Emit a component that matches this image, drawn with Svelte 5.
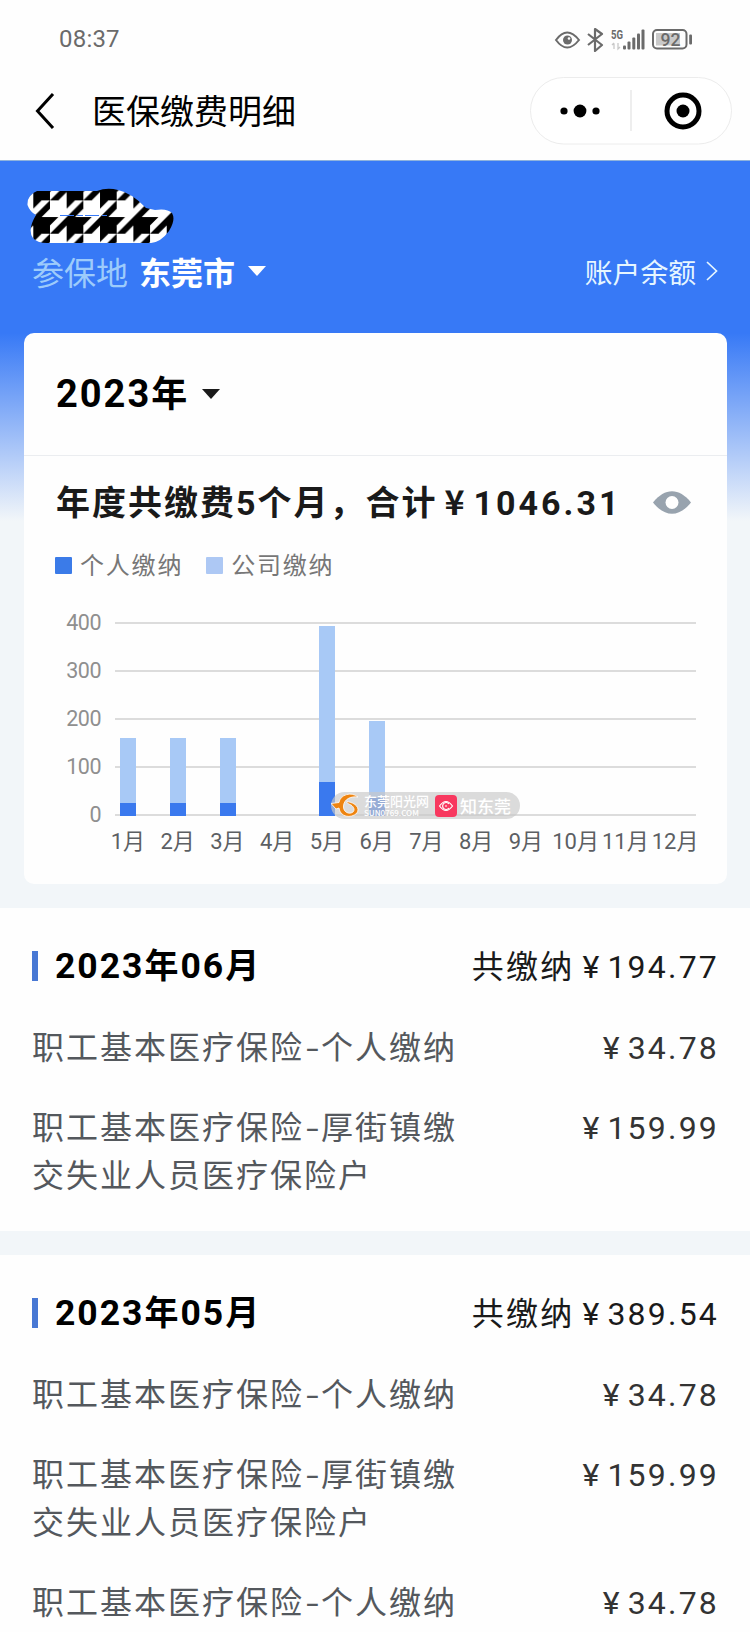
<script>
    const months = [
        {label: 1, self: 13, total: 78},
        {label: 2, self: 13, total: 78},
        {label: 3, self: 13, total: 78},
        {label: 4, self: 0, total: 0},
        {label: 5, self: 34, total: 190},
        {label: 6, self: 18, total: 95},
        {label: 7, self: 0, total: 0},
        {label: 8, self: 0, total: 0},
        {label: 9, self: 0, total: 0},
        {label: 10, self: 0, total: 0},
        {label: 11, self: 0, total: 0},
        {label: 12, self: 0, total: 0},
    ];

    const ticks = [400, 300, 200, 100, 0];

    const self = {name: '职工基本医疗保险', payer: '个人缴纳', money: '34.78'};
    const town = {name: '职工基本医疗保险', payer: '厚街镇缴交失业人员医疗保险户', money: '159.99'};

    const records = [
        {year: '2023', month: '06', sum: '194.77', rows: [self, town]},
        {year: '2023', month: '05', sum: '389.54', rows: [self, town, self]},
    ];
</script>

<div class="page">
    <header class="top">
        <div class="status">
            <span class="time">08:37</span>
            <svg class="status-icons" width="138" height="26" viewBox="0 0 138 26">
                <g fill="none" stroke="#6b6b6b" stroke-width="2">
                    <path d="M2 14Q13 -1 25 14Q13 29 2 14Z" />
                    <path d="M34 8L48 19L41 25V3L48 8L34 19" stroke-width="2.200" stroke-linejoin="round" />
                    <rect x="99" y="4" width="33.500" height="18.500" rx="4" />
                </g>
                <circle cx="13.500" cy="14" r="4.500" fill="#6b6b6b" />
                <circle cx="15" cy="12.500" r="1.300" fill="#fff" />
                <g fill="#6b6b6b">
                    <rect x="69" y="19.500" width="3" height="4" rx="1" />
                    <rect x="73.500" y="15.500" width="3" height="8" rx="1" />
                    <rect x="78.300" y="11.500" width="3" height="12" rx="1" />
                    <rect x="83" y="7.500" width="3" height="16" rx="1" />
                    <rect x="87.500" y="3.500" width="3" height="20" rx="1" />
                    <rect x="135.200" y="8.500" width="2.800" height="10" rx="1" />
                </g>
                <path d="M60 17.500V23M58 19L60 17M64 17V23L66 21" fill="none" stroke="#c8c8c8" stroke-width="1.300" />
                <rect x="102" y="7" width="24" height="12.500" fill="#c9c9c9" />
                <text x="57" y="13" font-size="13" font-weight="700" textLength="12" lengthAdjust="spacingAndGlyphs">5G</text>
                <text x="106.500" y="19.500" font-size="18" font-weight="500" textLength="20" lengthAdjust="spacingAndGlyphs">92</text>
            </svg>
        </div>
        <div class="nav">
            <svg class="back" width="20" height="36" viewBox="0 0 20 36">
                <path d="M18 1L2.500 18L18 35" fill="none" stroke="#000" stroke-width="3" />
            </svg>
            <h1>医保缴费明细</h1>
            <div class="capsule">
                <svg width="202" height="68" viewBox="0 0 202 68">
                    <rect x=".5" y=".5" width="201" height="66.500" rx="33.200" fill="#fff" stroke="#ececec" />
                    <circle cx="34" cy="34" r="3.600" />
                    <circle cx="50" cy="34" r="6.400" />
                    <circle cx="66" cy="34" r="3.600" />
                    <path d="M101 13V54" stroke="#ddd" />
                    <circle cx="153" cy="34" r="16" fill="none" stroke="#000" stroke-width="5" />
                    <circle cx="153" cy="34" r="6.500" />
                </svg>
            </div>
        </div>
    </header>

    <main>
        <svg class="name" width="148" height="58" viewBox="0 0 148 58">
            <defs>
                <pattern id="tooth" width="8" height="8" patternUnits="userSpaceOnUse" patternTransform="translate(6.300 -4.300) scale(4.170)">
                    <rect width="8" height="8" fill="#fff" />
                    <path d="M0 0H4V4H0ZM4 0H6L4 2ZM8 0V2L6 4H4ZM0 4H2L0 6ZM4 4V6L2 8H0Z" />
                </pattern>
            </defs>
            <path fill="url(#tooth)" d="M10 3Q0 7 .5 17Q3 24 9 27Q0 42 6 50Q10 55 20 55H124Q134 54 142 43Q149 32 145 25Q140 20 128 22L119 20Q105 5 91 2Q80 -1 70 3Z" />
            <path d="M33 27.500H80" stroke="#3779f6" stroke-dasharray="14 3 6 2" />
        </svg>
        <div class="place">
            <span class="place-label">参保地</span>
            <b>东莞市</b>
            <svg width="18" height="10" viewBox="0 0 18 10"><path d="M0 0H18L9 10Z" fill="#fff" /></svg>
            <a class="balance" href="#balance">
                账户余额
                <svg width="12" height="20" viewBox="0 0 12 20"><path d="M1 1L10.500 10L1 19" fill="none" stroke="#e6f6ff" stroke-width="1.700" /></svg>
            </a>
        </div>

        <section class="card">
            <div class="year">
                <b><span class="num">2023</span>年</b>
                <svg width="18" height="10" viewBox="0 0 18 10"><path d="M0 0H18L9 10Z" fill="#1a1a1a" /></svg>
            </div>
            <div class="total">
                <b>年度共缴费<span class="num">5</span>个月，合计<span class="yen">¥</span><span class="num">1046.31</span></b>
                <svg width="38" height="23" viewBox="0 0 38 23">
                    <path d="M0 11.500C12 -3.500 26 -3.500 38 11.500C26 26.500 12 26.500 0 11.500Z" fill="#98a3ae" />
                    <circle cx="19" cy="11.500" r="6.500" fill="#fff" />
                </svg>
            </div>
            <div class="legend">
                <i class="mark self"></i><span>个人缴纳</span>
                <i class="mark company"></i><span>公司缴纳</span>
            </div>
            <div class="chart">
                <div class="ticks">
                    {#each ticks as tick}
                        <span>{tick}</span>
                    {/each}
                </div>
                <div class="lines">
                    {#each ticks as tick}
                        <i></i>
                    {/each}
                </div>
                <div class="bars">
                    {#each months as month}
                        <div class="col">
                            <div class="bar" style="height: {month.total}px">
                                <div class="bar-self" style="height: {month.self}px"></div>
                            </div>
                        </div>
                    {/each}
                </div>
                <div class="labels">
                    {#each months as month}
                        <span>{month.label}月</span>
                    {/each}
                </div>
                <div class="stamp">
                    <svg class="sun" width="29" height="25" viewBox="0 0 29 25">
                        <path d="M27 4C20 -2 9 2 8 9.500L0 10.500L5 16L8 15C9 24 20 26 26 20C29 15 25 10 16 8.500C15 10 18 11 20 12C23 14 24 17 22 19C18 22 12 19 12.500 13C13 6 20 3 27 4Z" fill="#ee8410" stroke="#fff" stroke-width=".8" />
                    </svg>
                    <div class="stamp-sun"><span>东莞阳光网</span><small>SUN0769.COM</small></div>
                    <svg width="22" height="22" viewBox="0 0 22 22">
                        <rect width="22" height="22" rx="4" fill="#f8385f" />
                        <g fill="none" stroke="#fff" stroke-width="1.200">
                            <path d="M4.500 11Q11 2 17.500 11Q11 20 4.500 11Z" />
                            <path d="M14 9A3.500 3.500 0 1 0 14 13M12 11H10" />
                        </g>
                    </svg>
                    <span class="stamp-know">知东莞</span>
                </div>
            </div>
        </section>

        {#each records as record}
            <section class="record">
                <div class="head">
                    <i></i>
                    <b><span class="num">{record.year}</span>年<span class="num">{record.month}</span>月</b>
                    <span class="sum">共缴纳<span class="yen">¥</span>{record.sum}</span>
                </div>
                {#each record.rows as row}
                    <div class="row">
                        <span class="kind">{row.name}<span class="dash">-</span>{row.payer}</span>
                        <span class="money"><span class="yen">¥</span>{row.money}</span>
                    </div>
                {/each}
            </section>
        {/each}
    </main>
</div>

<style>
:global(body){
    margin: 0;
    background: #f2f6f9;
}

.page{
    width: 750px;
    height: 1632px;
    overflow: hidden;
    font-family: Roboto, "Noto Sans CJK SC", sans-serif;
    color: #1a1a1a;
}

.top{
    height: 161px;
    background: #fefefe;
    border-bottom: 1px solid #8fb3dc;
    box-sizing: border-box;
}

.status{
    display: flex;
    align-items: center;
    justify-content: space-between;
    height: 77px;
    padding: 0 58px 0 59px;
    box-sizing: border-box;
}

.time{
    font-size: 24px;
    letter-spacing: .2px;
    color: #6b6b6b;
}

.status-icons text{
    font-family: Roboto, sans-serif;
    fill: #6b6b6b;
}

.nav{
    display: flex;
    align-items: center;
    height: 68px;
    padding: 0 18px 0 35px;
}

h1{
    margin: 0 auto 0 37px;
    padding-bottom: 3px;
    font-family: "Noto Sans CJK SC", sans-serif;
    font-size: 34px;
    font-weight: 400;
    line-height: 65px;
    color: #000;
}

.capsule{
    height: 68px;
}

main{
    padding-top: 27px;
    background: linear-gradient(#3779f6 0, #3779f6 172px, #f2f6f9 360px);
}

.name{
    display: block;
    margin-left: 27px;
}

.place{
    display: flex;
    align-items: center;
    height: 49px;
    padding: 0 32px 0 32px;
    font-family: "Noto Sans CJK SC", sans-serif;
    font-size: 32px;
    color: #fff;
}

.place b{
    margin: 0 13px 0 11px;
}

.place-label{
    color: #9dcbfb;
}

.balance{
    display: flex;
    align-items: center;
    gap: 10px;
    margin-left: auto;
    font-size: 27.8px;
    color: #e6f6ff;
    text-decoration: none;
}

.card{
    width: 703px;
    height: 551px;
    margin: 38px 0 24px 24px;
    background: #fefefe;
    border-radius: 10px;
}

.num{
    font-family: Roboto, sans-serif;
}

.yen{
    display: inline-block;
    width: 33px;
    text-align: center;
    letter-spacing: 0;
}

.year{
    display: flex;
    align-items: center;
    gap: 13px;
    height: 122px;
    padding-left: 32px;
    border-bottom: 1px solid #ebedf0;
    font-family: "Noto Sans CJK SC", sans-serif;
    font-size: 36px;
    letter-spacing: 2px;
    color: #000;
}

.year b{
    padding-bottom: 7px;
}

.year .num{
    font-size: 38px;
}

.total{
    display: flex;
    align-items: center;
    justify-content: space-between;
    height: 92px;
    padding: 0 36px 0 32px;
    font-family: "Noto Sans CJK SC", sans-serif;
    font-size: 34px;
    letter-spacing: 2px;
    white-space: nowrap;
}

.total b{
    padding-bottom: 4px;
}

.total .yen{
    width: 34px;
    margin-right: 2px;
}

.total .yen + .num{
    letter-spacing: 3px;
}

.legend{
    display: flex;
    align-items: center;
    height: 34px;
    padding-left: 31px;
    font-family: "Noto Sans CJK SC", sans-serif;
    font-size: 24px;
    line-height: 31px;
    letter-spacing: 1.8px;
    color: #777;
}

.legend span{
    margin: 0 23px 3px 8px;
}

.mark{
    width: 17px;
    height: 17px;
    border-radius: 1px;
}

.self{
    background: #3b7be8;
}

.company{
    background: #adc8f4;
}

.chart{
    position: relative;
    display: grid;
    grid-template: 194px 50px / 78px 598px;
    margin-top: 40px;
}

.ticks{
    display: flex;
    flex-direction: column;
    justify-content: space-between;
    height: 216px;
    margin: -11px 1px 0 0;
    font-size: 21.5px;
    line-height: 24px;
    letter-spacing: -.5px;
    text-align: right;
    color: #8f8f8f;
}

.lines{
    grid-area: 1 / 2;
    display: flex;
    flex-direction: column;
    justify-content: space-between;
    margin: 0 4px 0 13px;
}

.lines i{
    height: 2px;
    background: #dcdcdc;
}

.bars{
    grid-area: 1 / 2;
    display: flex;
    z-index: 1;
    margin: 0 -1px 0 1px;
}

.col{
    display: flex;
    flex: 1;
    align-items: flex-end;
    justify-content: center;
}

.bar{
    display: flex;
    align-items: flex-end;
    width: 16px;
    background: #a8c9f6;
}

.bar-self{
    width: 16px;
    background: #3a79ee;
}

.labels{
    grid-area: 2 / 2;
    display: flex;
    padding-left: 1px;
    font-size: 22px;
    line-height: 52px;
    color: #5c5f63;
}

.labels span{
    flex: 1;
    text-align: center;
    white-space: nowrap;
}

.stamp{
    position: absolute;
    z-index: 2;
    left: 307px;
    top: 170px;
    display: flex;
    align-items: center;
    width: 189px;
    height: 27px;
    border-radius: 14px;
    background: rgba(200, 200, 200, .65);
    font-family: "Noto Sans CJK SC", sans-serif;
    font-weight: 500;
    color: #fff;
}

.sun{
    margin-right: 4px;
}

.stamp-sun{
    display: flex;
    flex-direction: column;
    width: 71px;
    font-size: 13px;
    line-height: 14px;
    white-space: nowrap;
}

.stamp-sun small{
    font-size: 8px;
    line-height: 9px;
}

.stamp-know{
    margin-left: 3px;
    font-size: 17px;
    line-height: 24px;
}

.record{
    margin-bottom: 24px;
    padding: 34px 31px 31px 32px;
    background: #fefefe;
}

.head{
    display: flex;
    align-items: center;
    height: 48px;
    margin-bottom: 34px;
}

.head i{
    width: 6px;
    height: 30px;
    margin-right: 17px;
    background: #4878d4;
}

.head b{
    padding-bottom: 5px;
    font-family: "Noto Sans CJK SC", sans-serif;
    font-size: 34px;
    letter-spacing: 2px;
    color: #000;
}

.head .num{
    font-size: 35.5px;
}

.sum{
    margin-left: auto;
    padding-bottom: 5px;
    font-size: 32px;
    letter-spacing: 2.2px;
}

.row{
    display: flex;
    justify-content: space-between;
    margin-bottom: 32px;
    font-size: 32px;
    line-height: 48px;
    letter-spacing: 2px;
}

.row:last-child{
    margin-bottom: 0;
}

.kind{
    width: 430px;
    color: #54585d;
}

.dash{
    display: inline-block;
    width: 17px;
    text-align: center;
    letter-spacing: 0;
    transform: scaleX(1.4);
}

.money{
    letter-spacing: 2.2px;
    color: #333;
}
</style>
